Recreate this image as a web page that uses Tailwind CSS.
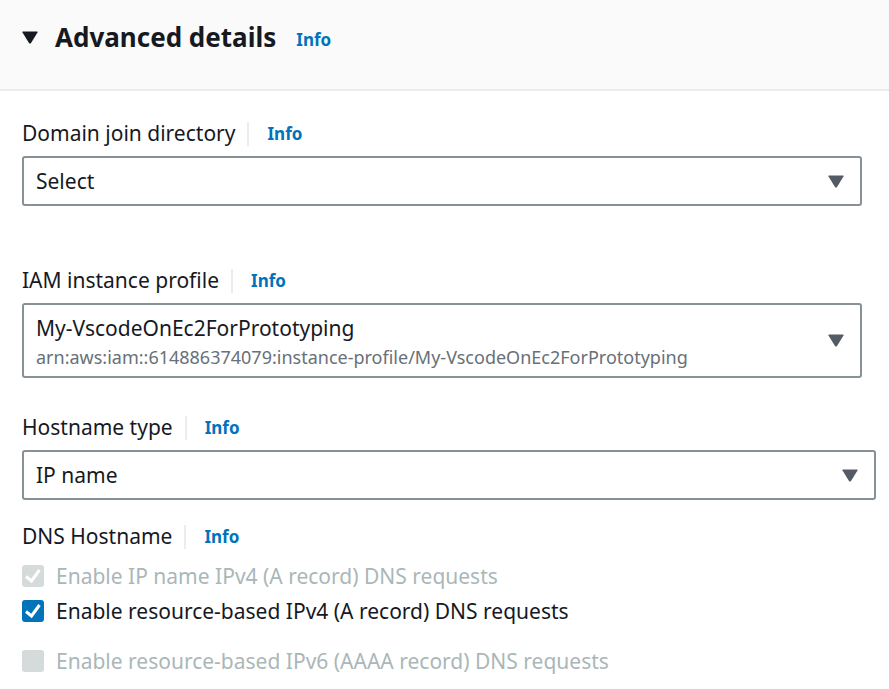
<!DOCTYPE html>
<html lang="en">
<head>
<meta charset="utf-8">
<meta name="viewport" content="width=device-width, initial-scale=1">
<title>Advanced details</title>
<script src="https://cdn.jsdelivr.net/npm/@tailwindcss/browser@4"></script>
</head>
<body class="min-h-screen bg-white font-['Noto_Sans','Open_Sans',sans-serif] text-[21px] text-[#16191f]">
<section>
  <header class="flex items-center border-b-2 border-[#eaeded] bg-[#fafafa] px-[22px] pt-[15px] pb-[29px]">
    <h2 class="text-[26px] leading-[45px] font-bold">
      <button type="button" aria-expanded="true" class="flex items-center gap-[17px]">
        <svg class="h-[13px] w-4" viewBox="0 0 16 13" aria-hidden="true"><path d="M1 .5h14q1 0 .5 1L9 12q-1 1-2 0L.5 1.500Q0 .5 1 .5Z" fill="#16191f"/></svg>
        Advanced details
      </button>
    </h2>
    <a href="#" class="ml-5 pt-1 text-[17px] leading-6 font-bold text-[#0073bb]">Info</a>
  </header>

  <form class="flex flex-col pt-[31px] pr-[13px] pl-[22px]">
    <div class="mr-[14px] mb-[63px] flex flex-col gap-[10px]">
      <div class="flex h-6 items-center">
        <label for="domain" class="h-6 border-r-2 border-[#eaeded] pr-3 leading-[22px]">Domain join directory</label>
        <a href="#" class="ml-[18px] text-[17px] leading-6 font-bold text-[#0073bb]">Info</a>
      </div>
      <div class="relative">
        <select id="domain" class="block h-[50px] w-full appearance-none rounded-[3px] border-2 border-[#879196] bg-white px-3 pt-[2px]"><option>Select</option></select>
        <svg class="pointer-events-none absolute top-[19px] right-[18px] h-[13px] w-4" viewBox="0 0 16 13" aria-hidden="true"><path d="M1 .5h14q1 0 .5 1L9 12q-1 1-2 0L.5 1.500Q0 .5 1 .5Z" fill="#545b64"/></svg>
      </div>
    </div>

    <div class="mr-[14px] mb-[38px] flex flex-col gap-[10px]">
      <div class="flex h-6 items-center">
        <label for="profile" class="h-6 border-r-2 border-[#eaeded] pr-3 leading-[22px]">IAM instance profile</label>
        <a href="#" class="ml-[18px] text-[17px] leading-6 font-bold text-[#0073bb]">Info</a>
      </div>
      <button id="profile" type="button" aria-haspopup="listbox" class="flex h-[75px] items-center justify-between rounded-[3px] border-2 border-[#879196] bg-white pr-4 pl-3 text-left">
        <span class="flex flex-col pt-[2px]">
          <span class="leading-[30px]">My-VscodeOnEc2ForPrototyping</span>
          <span class="text-[18px] leading-7 text-[#687078]">arn:aws:iam::614886374079:instance-profile/My-VscodeOnEc2ForPrototyping</span>
        </span>
        <svg class="h-[13px] w-4" viewBox="0 0 16 13" aria-hidden="true"><path d="M1 .5h14q1 0 .5 1L9 12q-1 1-2 0L.5 1.500Q0 .5 1 .5Z" fill="#545b64"/></svg>
      </button>
    </div>

    <div class="mb-[25px] flex flex-col gap-[10px]">
      <div class="flex h-6 items-center">
        <label for="hostname" class="h-6 border-r-2 border-[#eaeded] pr-3 leading-[22px]">Hostname type</label>
        <a href="#" class="ml-[18px] text-[17px] leading-6 font-bold text-[#0073bb]">Info</a>
      </div>
      <div class="relative">
        <select id="hostname" class="block h-[50px] w-full appearance-none rounded-[3px] border-2 border-[#879196] bg-white px-3 pt-[2px]"><option>IP name</option></select>
        <svg class="pointer-events-none absolute top-[19px] right-[18px] h-[13px] w-4" viewBox="0 0 16 13" aria-hidden="true"><path d="M1 .5h14q1 0 .5 1L9 12q-1 1-2 0L.5 1.500Q0 .5 1 .5Z" fill="#545b64"/></svg>
      </div>
    </div>

    <div role="group" aria-labelledby="dns">
      <div class="mb-4 flex h-6 items-center">
        <span id="dns" class="h-6 border-r-2 border-[#eaeded] pr-3 leading-[22px]">DNS Hostname</span>
        <a href="#" class="ml-[18px] text-[17px] leading-6 font-bold text-[#0073bb]">Info</a>
      </div>
      <label class="mb-[13px] flex h-[22px] items-start gap-3 leading-[22px] text-[#aab7b8]">
        <span class="grid">
          <input type="checkbox" checked disabled class="peer col-start-1 row-start-1 size-[22px] appearance-none rounded-[3px] bg-[#d5dbdb]">
          <svg class="pointer-events-none invisible col-start-1 row-start-1 size-[22px] peer-checked:visible" viewBox="0 0 22 22" fill="none" stroke="#fff" stroke-width="3" aria-hidden="true"><path d="m4 11.500 5.500 4.500L17.500 5"/></svg>
        </span>
        Enable IP name IPv4 (A record) DNS requests
      </label>
      <label class="mb-7 flex h-[22px] items-start gap-3 leading-[22px]">
        <span class="grid">
          <input type="checkbox" checked class="peer col-start-1 row-start-1 size-[22px] appearance-none rounded-[3px] border-2 border-[#879196] checked:border-[#0073bb] checked:bg-[#0073bb]">
          <svg class="pointer-events-none invisible col-start-1 row-start-1 size-[22px] peer-checked:visible" viewBox="0 0 22 22" fill="none" stroke="#fff" stroke-width="3" aria-hidden="true"><path d="m4 11.500 5.500 4.500L17.500 5"/></svg>
        </span>
        Enable resource-based IPv4 (A record) DNS requests
      </label>
      <label class="flex h-[22px] items-start gap-3 leading-[22px] text-[#aab7b8]">
        <input type="checkbox" disabled class="size-[22px] appearance-none rounded-[3px] bg-[#d5dbdb]">
        Enable resource-based IPv6 (AAAA record) DNS requests
      </label>
    </div>
  </form>
</section>
</body>
</html>
